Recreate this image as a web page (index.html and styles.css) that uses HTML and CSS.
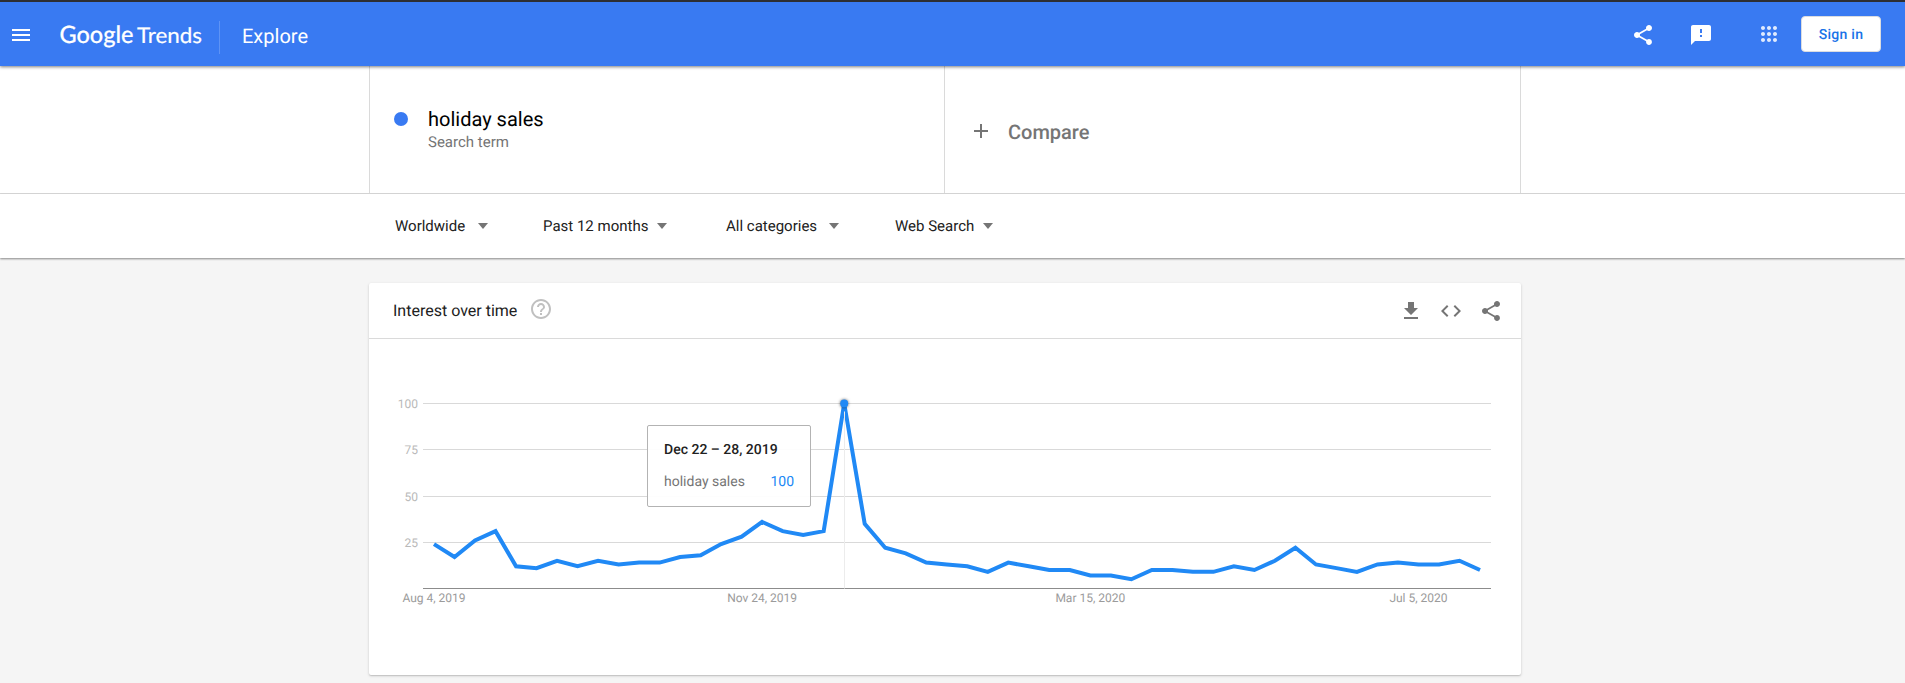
FILE: index.html
```
<!DOCTYPE html>
<html lang="en">
<head>
  <meta charset="utf-8">
  <title>holiday sales - Explore - Google Trends</title>
  <link rel="stylesheet" href="styles.css">
</head>
<body>
  <header class="header">
    <button class="icon-button menu" aria-label="Menu">
      <svg width="24" height="24" viewBox="0 0 24 24"><path d="M3 18h18v-2H3v2zm0-5h18v-2H3v2zm0-7v2h18V6H3z"/></svg>
    </button>
    <svg class="logo" width="146" height="36">
      <text class="logo-google" x="-0.5" y="24.5" textLength="74" lengthAdjust="spacingAndGlyphs">Google</text>
      <text class="logo-trends" x="77" y="24.5" textLength="65" lengthAdjust="spacingAndGlyphs">Trends</text>
    </svg>
    <span class="header-title">Explore</span>
    <div class="header-actions">
      <svg class="action-share" width="24" height="24" viewBox="0 0 24 24"><path d="M18 16.08c-.76 0-1.44.3-1.96.77L8.91 12.7c.05-.23.09-.46.09-.7s-.04-.47-.09-.7l7.05-4.11c.54.5 1.25.81 2.04.81 1.66 0 3-1.34 3-3s-1.34-3-3-3-3 1.34-3 3c0 .24.04.47.09.7L8.04 9.81C7.5 9.31 6.79 9 6 9c-1.66 0-3 1.34-3 3s1.34 3 3 3c.79 0 1.5-.31 2.04-.81l7.12 4.16c-.05.21-.08.43-.08.65 0 1.61 1.31 2.92 2.92 2.92s2.92-1.31 2.92-2.92-1.31-2.92-2.92-2.92z"/></svg>
      <svg class="action-feedback" width="24" height="24" viewBox="0 0 24 24"><path d="M20 2H4c-1.1 0-1.99.9-1.99 2L2 22l4-4h14c1.1 0 2-.9 2-2V4c0-1.1-.9-2-2-2zm-7 12h-2v-2h2v2zm0-4h-2V6h2v4z"/></svg>
      <svg class="action-apps" width="24" height="24" viewBox="0 0 24 24"><path d="M6 8c1.1 0 2-.9 2-2s-.9-2-2-2-2 .9-2 2 .9 2 2 2zm6 12c1.1 0 2-.9 2-2s-.9-2-2-2-2 .9-2 2 .9 2 2 2zm-6 0c1.1 0 2-.9 2-2s-.9-2-2-2-2 .9-2 2 .9 2 2 2zm0-6c1.1 0 2-.9 2-2s-.9-2-2-2-2 .9-2 2 .9 2 2 2zm6 0c1.1 0 2-.9 2-2s-.9-2-2-2-2 .9-2 2 .9 2 2 2zm4-8c0 1.1.9 2 2 2s2-.9 2-2-.9-2-2-2-2 .9-2 2zm-4 2c1.1 0 2-.9 2-2s-.9-2-2-2-2 .9-2 2 .9 2 2 2zm6 6c1.1 0 2-.9 2-2s-.9-2-2-2-2 .9-2 2 .9 2 2 2zm0 6c1.1 0 2-.9 2-2s-.9-2-2-2-2 .9-2 2 .9 2 2 2z"/></svg>
      <a class="sign-in">Sign in</a>
    </div>
  </header>

  <section class="search">
    <div class="terms">
      <div class="term">
        <span class="term-dot"></span>
        <div>
          <div class="term-name">holiday sales</div>
          <div class="term-type">Search term</div>
        </div>
      </div>
      <div class="term compare">
        <svg width="24" height="24" viewBox="0 0 24 24"><path d="M19 13h-6v6h-2v-6H5v-2h6V5h2v6h6v2z"/></svg>
        <span class="compare-label">Compare</span>
      </div>
    </div>
  </section>

  <nav class="filters">
    <div class="filter filter-geo">Worldwide<i class="caret"></i></div>
    <div class="filter filter-time">Past 12 months<i class="caret"></i></div>
    <div class="filter filter-category">All categories<i class="caret"></i></div>
    <div class="filter filter-source">Web Search<i class="caret"></i></div>
  </nav>

  <main class="card">
    <div class="card-header">
      <h1>Interest over time</h1>
      <svg class="help" width="24" height="24" viewBox="0 0 24 24"><path d="M11 18h2v-2h-2v2zm1-16C6.48 2 2 6.48 2 12s4.48 10 10 10 10-4.48 10-10S17.52 2 12 2zm0 18c-4.41 0-8-3.59-8-8s3.59-8 8-8 8 3.59 8 8-3.59 8-8 8zm0-14c-2.21 0-4 1.79-4 4h2c0-1.1.9-2 2-2s2 .9 2 2c0 2-3 1.75-3 5h2c0-2.25 3-2.5 3-5 0-2.21-1.79-4-4-4z"/></svg>
      <div class="card-actions">
        <svg width="24" height="24" viewBox="0 0 24 24"><path d="M19 9h-4V3H9v6H5l7 7 7-7zM5 18v2h14v-2H5z"/></svg>
        <svg width="24" height="24" viewBox="0 0 24 24"><path d="M9.4 16.6L4.8 12l4.6-4.6L8 6l-6 6 6 6 1.4-1.4zm5.2 0l4.6-4.6-4.6-4.6L16 6l6 6-6 6-1.4-1.4z"/></svg>
        <svg width="24" height="24" viewBox="0 0 24 24"><path d="M18 16.08c-.76 0-1.44.3-1.96.77L8.91 12.7c.05-.23.09-.46.09-.7s-.04-.47-.09-.7l7.05-4.11c.54.5 1.25.81 2.04.81 1.66 0 3-1.34 3-3s-1.34-3-3-3-3 1.34-3 3c0 .24.04.47.09.7L8.04 9.81C7.5 9.31 6.79 9 6 9c-1.66 0-3 1.34-3 3s1.34 3 3 3c.79 0 1.5-.31 2.04-.81l7.12 4.16c-.05.21-.08.43-.08.65 0 1.61 1.31 2.92 2.92 2.92s2.92-1.31 2.92-2.92-1.31-2.92-2.92-2.92z"/></svg>
      </div>
    </div>
    <div class="chart">
      <svg id="chart" width="1152" height="336"></svg>
      <div class="tooltip">
        <div class="tooltip-date">Dec 22 – 28, 2019</div>
        <div class="tooltip-row"><span>holiday sales</span><span class="tooltip-value">100</span></div>
      </div>
    </div>
  </main>

  <script src="chart.js"></script>
</body>
</html>
```
FILE: styles.css
```
body {
  margin: 0;
  height: 683px;
  overflow: hidden;
  background: #f5f5f5;
  color: #212121;
  font: 14px/20px Roboto, sans-serif;
  text-rendering: geometricPrecision;
}
svg {
  display: block;
  flex-shrink: 0;
}

/* header */
.header {
  display: flex;
  align-items: center;
  box-sizing: border-box;
  height: 66px;
  padding-top: 2px;
  border-top: 2px solid #2d2e33;
  background: #397af2;
  color: white;
  fill: white;
  box-shadow: 0 1px 3px rgba(0, 0, 0, 0.5);
  position: relative; /* keeps the shadow over the terms */
}
.icon-button {
  padding: 0;
  border: 0;
  background: none;
  fill: inherit;
}
.menu {
  margin-left: 9px;
}
.logo {
  margin-left: 27px;
  margin-top: 2px;
}
.logo-google {
  font: 500 24px Lato, sans-serif;
  stroke: white;
  stroke-width: 0.2px;
}
.logo-trends {
  font: 400 21.5px Lato, sans-serif;
  stroke: white;
  stroke-width: 0.2px;
}
.header-title {
  height: 33px;
  margin: 5px 0 0 13px;
  padding-left: 22px;
  border-left: 1px solid #5e93f5;
  font-size: 20px;
  line-height: 31px;
}
.header-actions {
  display: flex;
  align-items: center;
  margin-left: auto;
  margin-right: 24px;
}
.action-feedback {
  margin-left: 34px;
}
.action-apps {
  margin-left: 44px;
  margin-bottom: 2px;
  opacity: 0.85;
}
.sign-in {
  box-sizing: border-box;
  width: 80px;
  height: 36px;
  margin: 0 0 2px 20px;
  border: 1px solid #dadce0;
  border-radius: 4px;
  background: white;
  color: #1a73e8;
  font-weight: 500;
  letter-spacing: 0.25px;
  line-height: 36px;
  text-align: center;
}

/* search terms */
.search {
  background: white;
  border-bottom: 1px solid #dadada;
}
.terms {
  display: flex;
  box-sizing: border-box;
  width: 1152px;
  height: 127px;
  margin-left: 369px;
  border-right: 1px solid #dadada;
}
.term {
  display: flex;
  box-sizing: border-box;
  width: 575px;
  padding: 41px 0 0 23px;
  border-left: 1px solid #dadada;
}
.term-dot {
  width: 14px;
  height: 14px;
  margin: 5px 20px 0 1px;
  border-radius: 50%;
  background: #397af2;
}
.term-name {
  color: black;
  font-size: 20px;
  line-height: 25px;
}
.term-type {
  color: #757575;
  font-size: 15px;
  line-height: 21px;
}
.compare {
  width: 576px;
  padding: 53px 0 0 24px;
  fill: #757575;
}
.compare-label {
  margin-left: 15px;
  color: #757575;
  font-size: 20px;
  font-weight: 500;
  line-height: 26px;
}

/* filters */
.filters {
  display: flex;
  box-sizing: border-box;
  height: 64px;
  padding: 22px 0 0 395px;
  background: white;
  box-shadow: 0 1px 2px rgba(0, 0, 0, 0.45);
  font-size: 15px;
}
.filter {
  display: flex;
  align-items: center;
  justify-content: space-between;
  height: 20px;
}
.filter-geo {
  width: 93px;
}
.filter-time {
  width: 124px;
  margin-left: 55px;
}
.filter-category {
  width: 113px;
  margin-left: 59px;
}
.filter-source {
  width: 98px;
  margin-left: 56px;
}
.caret {
  border: 5px solid transparent;
  border-top: 6px solid #757575;
  border-bottom: 0;
}

/* card */
.card {
  width: 1152px;
  height: 392px;
  margin: 25px 0 0 369px;
  border-radius: 2px;
  background: white;
  box-shadow: 0 1px 3px rgba(0, 0, 0, 0.16), 0 1px 1px rgba(0, 0, 0, 0.1);
}
.card-header {
  display: flex;
  align-items: center;
  box-sizing: border-box;
  height: 56px;
  padding: 0 18px 0 24px;
  border-bottom: 1px solid #dadada;
  fill: #757575;
}
.card-header h1 {
  margin: 0;
  font-size: 16px;
  font-weight: 400;
}
.help {
  margin: -3px 0 0 12px;
  fill: #c0c0c0;
}
.card-actions {
  display: flex;
  gap: 16px;
  margin-left: auto;
}

/* chart */
.chart {
  position: relative;
}
.grid {
  stroke: #d9d9d9;
}
.axis {
  stroke: #8c8c8c;
}
.marker {
  stroke: #ececec;
}
.label-y {
  fill: #b9b9b9;
  font-size: 12px;
  text-anchor: end;
}
.label-x {
  fill: #9b9b9b;
  font-size: 12px;
  text-anchor: middle;
}
.series {
  fill: none;
  stroke: #2089f5;
  stroke-width: 4px;
}
.point {
  fill: #2089f5;
  filter: drop-shadow(0 0 1.5px rgba(0, 0, 0, 0.6));
}
.tooltip {
  position: absolute;
  left: 278px;
  top: 86px;
  box-sizing: border-box;
  width: 164px;
  height: 82px;
  padding: 14px 16px;
  border: 1px solid #b3b3b3;
  border-radius: 2px;
  background: rgba(255, 255, 255, 0.95);
}
.tooltip-date {
  font-weight: 500;
}
.tooltip-row {
  display: flex;
  justify-content: space-between;
  margin-top: 12px;
  color: #757575;
}
.tooltip-value {
  color: #2089f5;
}
```
FILE: chart.js
```
const values = [
  24, 17, 26, 31, 12, 11, 15, 12, 15, 13, 14, 14, 17,
  18, 24, 28, 36, 31, 29, 31, 100, 35, 22, 19, 14, 13,
  12, 9, 14, 12, 10, 10, 7, 7, 5, 10, 10, 9, 9,
  12, 10, 15, 22, 13, 11, 9, 13, 14, 13, 13, 15, 10
];
const dates = { 0: 'Aug 4, 2019', 16: 'Nov 24, 2019', 32: 'Mar 15, 2020', 48: 'Jul 5, 2020' };
const peak = 20;

const svg = document.getElementById('chart');
const x = (i) => 65 + i * 20.51;
const y = (v) => 249.5 - v * 1.85;

function add(name, attrs, text) {
  const el = document.createElementNS('http://www.w3.org/2000/svg', name);
  Object.keys(attrs).forEach((key) => el.setAttribute(key, attrs[key]));
  if (text) el.textContent = text;
  svg.appendChild(el);
}

[0, 25, 50, 75, 100].forEach((v) => {
  const top = Math.floor(y(v)) + 0.5;
  add('line', { class: v ? 'grid' : 'axis', x1: 54, x2: 1122, y1: top, y2: top });
  if (v) add('text', { class: 'label-y', x: 49, y: top + 4.5 }, String(v));
});

Object.keys(dates).forEach((i) => {
  add('text', { class: 'label-x', x: x(i), y: 263 }, dates[i]);
});

add('polyline', { class: 'series', points: values.map((v, i) => x(i) + ',' + y(v)).join(' ') });
add('line', { class: 'marker', x1: 475.5, x2: 475.5, y1: y(100) + 8, y2: y(0) });
add('circle', { class: 'point', cx: x(peak), cy: y(100), r: 4 });
```
